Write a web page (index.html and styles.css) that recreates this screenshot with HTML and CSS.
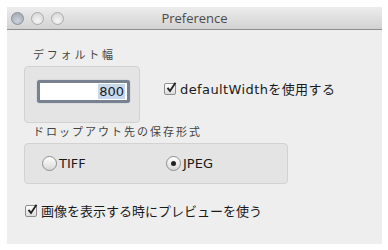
FILE: index.html
```html
<!DOCTYPE html>
<html lang="ja">
<head>
    <meta charset="UTF-8">
    <title>Preference</title>
    <link rel="stylesheet" href="styles.css">
</head>
<body>

    <div class="window">
        <div class="titlebar">
            <div class="lights">
                <span class="light light-close"></span>
                <span class="light"></span>
                <span class="light"></span>
            </div>
            <div class="title">Preference</div>
        </div>

        <div class="content">
            <div class="group-label label-width">デフォルト幅</div>
            <div class="width-row">
                <div class="group-box width-box">
                    <div class="text-field"><span class="selected">800</span></div>
                </div>
                <label class="check check-width">
                    <span class="check-box">
                        <svg width="12" height="12" viewBox="0 0 12 12"><path d="M2.5 5.8 L5 9 L10.5 0.8" fill="none" stroke="#222" stroke-width="1.9"/></svg>
                    </span>
                    defaultWidthを使用する
                </label>
            </div>

            <div class="group-label label-format">ドロップアウト先の保存形式</div>
            <div class="group-box format-box">
                <label class="radio radio-tiff"><span class="radio-dot"></span>TIFF</label>
                <label class="radio"><span class="radio-dot on"></span>JPEG</label>
            </div>

            <label class="check check-preview">
                <span class="check-box">
                    <svg width="12" height="12" viewBox="0 0 12 12"><path d="M2.5 5.8 L5 9 L10.5 0.8" fill="none" stroke="#222" stroke-width="1.9"/></svg>
                </span>
                画像を表示する時にプレビューを使う
            </label>
        </div>
    </div>

</body>
</html>
```

FILE: styles.css
```css
body {
    margin: 0;
    padding: 0;
    background-color: #ffffff;
    font-family: "DejaVu Sans", "Noto Sans CJK JP", sans-serif;
    color: #1a1a1a;
}

.window {
    margin: 7px 0 0 7px;
    width: 375px;
    height: 237px;
    background-color: #eeeeee;
    display: flex;
    flex-direction: column;
}

.titlebar {
    height: 22px;
    display: flex;
    align-items: center;
    background: linear-gradient(#ededed, #d2d2d2);
    border-bottom: 1px solid #8e8e8e;
    position: relative;
}

.lights {
    display: flex;
    gap: 7px;
    padding-left: 4px;
}

.light {
    width: 13px;
    height: 13px;
    border-radius: 50%;
    border: 1px solid #acacac;
    background: radial-gradient(circle at 50% 70%, #f6f6f6, #d0d0d0);
    box-sizing: border-box;
}

.light-close {
    border-color: #8a909a;
    background: radial-gradient(circle at 50% 70%, #ccd3dc, #99a2ae);
}

.title {
    position: absolute;
    left: 0;
    right: 0;
    text-align: center;
    font-family: "Open Sans", sans-serif;
    font-size: 13px;
    color: #4a4a4a;
}

.content {
    padding: 17px 0 0 17px;
}

.group-label {
    font-family: "Noto Sans CJK JP", sans-serif;
    font-size: 11px;
    color: #444;
    padding-left: 9px;
    letter-spacing: 2px;
    line-height: 14px;
}

.label-width {
    letter-spacing: 2.8px;
}

.width-row {
    display: flex;
    align-items: flex-start;
    margin-top: 5px;
}

.group-box {
    background-color: #e4e4e4;
    border: 1px solid #d2d2d2;
    border-radius: 4px;
}

.width-box {
    width: 116px;
    height: 57px;
    box-sizing: border-box;
    padding: 13px 0 0 12px;
}

.text-field {
    width: 93px;
    height: 23px;
    box-sizing: border-box;
    border: 3px solid #77818f;
    border-radius: 3px;
    background-color: #ffffff;
    text-align: right;
    padding: 1px 2px 0 0;
    font-size: 13px;
    line-height: 15px;
    box-shadow: 0 0 1px #77818f;
}

.selected {
    background-color: #c6d8ee;
    padding: 0 1px;
}

.check {
    display: flex;
    align-items: center;
    font-size: 13px;
}

.check-box {
    width: 12px;
    height: 12px;
    box-sizing: border-box;
    border: 1px solid #8d8d8d;
    border-radius: 2px;
    background: linear-gradient(#ffffff, #dcdcdc);
    margin-right: 4px;
    position: relative;
}

.check-box svg {
    position: absolute;
    left: 0;
    top: -2px;
}

.check-width {
    margin: 13px 0 0 24px;
    letter-spacing: 0.4px;
}

.label-format {
    margin-top: 1px;
}

.format-box {
    width: 264px;
    height: 41px;
    box-sizing: border-box;
    margin-top: 5px;
    display: flex;
    align-items: center;
    padding-left: 17px;
}

.radio {
    display: flex;
    align-items: center;
    font-size: 13px;
}

.radio-tiff {
    width: 124px;
}

.radio-dot {
    width: 15px;
    height: 15px;
    box-sizing: border-box;
    border-radius: 50%;
    border: 1px solid #8f8f8f;
    background: linear-gradient(#ffffff, #d8d8d8);
    margin-right: 2px;
    position: relative;
}

.radio-dot.on::after {
    content: "";
    position: absolute;
    left: 4px;
    top: 4px;
    width: 5px;
    height: 5px;
    border-radius: 50%;
    background-color: #222;
}

.check-preview {
    margin: 17px 0 0 1px;
}
```
